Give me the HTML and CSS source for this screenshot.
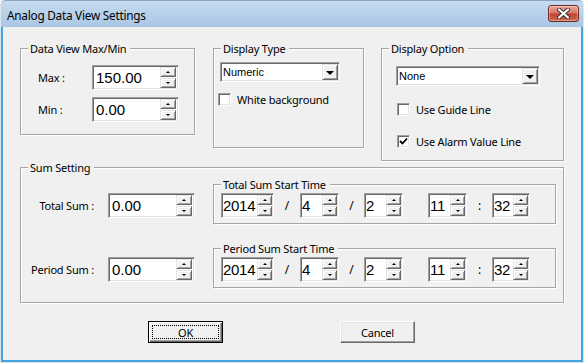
FILE: index.html
```html
<!DOCTYPE html>
<html>
<head>
<meta charset="utf-8">
<link rel="stylesheet" href="styles.css">
</head>
<body>
<div class="window">
  <div class="titlebar">
    <span class="title">Analog Data View Settings</span>
    <div class="close">
      <svg width="15" height="11" viewBox="0 0 15 11">
        <path d="M3 1.5 L12 9.5 M12 1.5 L3 9.5" stroke="#3a2a2a" stroke-width="4" stroke-linecap="round" fill="none"/>
        <path d="M3 1.5 L12 9.5 M12 1.5 L3 9.5" stroke="#ffffff" stroke-width="2.2" stroke-linecap="round" fill="none"/>
      </svg>
    </div>
  </div>
  <div class="client">
    <div class="top-row">
      <div class="group g-maxmin">
        <span class="legend">Data View Max/Min</span>
        <div class="field-row">
          <span class="lbl lbl-mm">Max :</span>
          <div class="edit edit-87"><span class="val">150.00</span><span class="ud"><i class="up"></i><i class="dn"></i></span></div>
        </div>
        <div class="field-row">
          <span class="lbl lbl-mm">Min :</span>
          <div class="edit edit-87"><span class="val">0.00</span><span class="ud"><i class="up"></i><i class="dn"></i></span></div>
        </div>
      </div>
      <div class="group g-type">
        <span class="legend">Display Type</span>
        <div class="combo combo-type"><span class="ctext">Numeric</span><span class="carrow"></span></div>
        <label class="check check-type"><span class="cb"></span><span class="ctxt">White background</span></label>
      </div>
      <div class="group g-opt">
        <span class="legend">Display Option</span>
        <div class="combo combo-opt"><span class="ctext">None</span><span class="carrow"></span></div>
        <label class="check check-opt1"><span class="cb"></span><span class="ctxt">Use Guide Line</span></label>
        <label class="check check-opt2"><span class="cb checked"><svg width="9" height="9" viewBox="0 0 9 9"><path d="M1 4 L3.5 6.5 L8 1.5" stroke="#000" stroke-width="1.8" fill="none"/></svg></span><span class="ctxt">Use Alarm Value Line</span></label>
      </div>
    </div>

    <div class="group g-sum">
      <span class="legend">Sum Setting</span>
      <div class="sum-row">
        <div class="sum-left">
          <span class="lbl lbl-sum">Total Sum :</span>
          <div class="edit edit-87"><span class="val">0.00</span><span class="ud"><i class="up"></i><i class="dn"></i></span></div>
        </div>
        <div class="group g-time">
          <span class="legend">Total Sum Start Time</span>
          <div class="time-row">
            <div class="edit edit-t edit-year"><span class="val">2014</span><span class="ud"><i class="up"></i><i class="dn"></i></span></div>
            <span class="sep sep-first">/</span>
            <div class="edit edit-t edit-small"><span class="val">4</span><span class="ud"><i class="up"></i><i class="dn"></i></span></div>
            <span class="sep">/</span>
            <div class="edit edit-t edit-small"><span class="val">2</span><span class="ud"><i class="up"></i><i class="dn"></i></span></div>
            <span class="sep"></span>
            <div class="edit edit-t edit-small"><span class="val">11</span><span class="ud"><i class="up"></i><i class="dn"></i></span></div>
            <span class="sep">:</span>
            <div class="edit edit-t edit-min"><span class="val">32</span><span class="ud"><i class="up"></i><i class="dn"></i></span></div>
          </div>
        </div>
      </div>
      <div class="sum-row sum-row-2">
        <div class="sum-left">
          <span class="lbl lbl-sum">Period Sum :</span>
          <div class="edit edit-87"><span class="val">0.00</span><span class="ud"><i class="up"></i><i class="dn"></i></span></div>
        </div>
        <div class="group g-time">
          <span class="legend">Period Sum Start Time</span>
          <div class="time-row">
            <div class="edit edit-t edit-year"><span class="val">2014</span><span class="ud"><i class="up"></i><i class="dn"></i></span></div>
            <span class="sep sep-first">/</span>
            <div class="edit edit-t edit-small"><span class="val">4</span><span class="ud"><i class="up"></i><i class="dn"></i></span></div>
            <span class="sep">/</span>
            <div class="edit edit-t edit-small"><span class="val">2</span><span class="ud"><i class="up"></i><i class="dn"></i></span></div>
            <span class="sep"></span>
            <div class="edit edit-t edit-small"><span class="val">11</span><span class="ud"><i class="up"></i><i class="dn"></i></span></div>
            <span class="sep">:</span>
            <div class="edit edit-t edit-min"><span class="val">32</span><span class="ud"><i class="up"></i><i class="dn"></i></span></div>
          </div>
        </div>
      </div>
    </div>

    <div class="buttons">
      <div class="btn btn-default"><span class="focus">OK</span></div>
      <div class="btn btn-cancel">Cancel</div>
    </div>
  </div>
</div>
</body>
</html>
```
FILE: styles.css
```css
* { box-sizing: border-box; }
html, body { margin: 0; padding: 0; background: #f0f0f0; }
body {
  font-family: "Noto Sans", sans-serif;
  font-size: 11px;
  letter-spacing: -0.2px;
  color: #000;
}
.window {
  width: 584px;
  height: 363px;
  display: flex;
  flex-direction: column;
  background: #b9d1ea;
  border: 1px solid #8ba2bb;
  border-bottom-color: #dbe6f1;
  border-left-color: #dbe6f1;
  border-right-color: #dbe6f1;
  border-radius: 6px 6px 0 0;
  overflow: hidden;
}
.titlebar {
  height: 26px;
  flex: none;
  display: flex;
  align-items: center;
  justify-content: space-between;
  padding: 0 4px 0 6px;
  background: linear-gradient(#c6dbf0, #aac6e4);
}
.title { font-size: 11.8px; letter-spacing: -0.25px; color: #000; padding-top: 1px; }
.close {
  width: 31px;
  height: 17px;
  margin-top: -2px;
  border: 1px solid #6b2a24;
  border-radius: 3px;
  background: linear-gradient(#e9a99c 0%, #d3776a 45%, #c3422f 55%, #cf6a52 100%);
  box-shadow: inset 0 0 0 1px rgba(255,255,255,0.35);
  display: flex;
  align-items: center;
  justify-content: center;
}
.client {
  flex: 1;
  background: #f0f0f0;
  border: 2px solid #47a3dc;
  border-top: none;
  padding: 21px 0 0 17px;
}

/* group boxes */
.group {
  position: relative;
  border: 1px solid #a6a6a6;
  box-shadow: 1px 1px 0 #fff, inset 1px 1px 0 #fff;
}
.legend {
  position: absolute;
  top: -8px;
  left: 7px;
  padding: 0 4px 0 2px;
  line-height: 15px;
  background: #f0f0f0;
  white-space: nowrap;
}
.top-row { display: flex; align-items: flex-start; }
.g-maxmin { width: 175px; height: 87px; padding: 16px 0 0 17px; }
.g-type { width: 151px; height: 100px; margin-left: 18px; padding: 13px 0 0 6px; }
.g-opt { width: 183px; height: 113px; margin-left: 17px; padding: 17px 0 0 14px; }

.field-row { display: flex; align-items: center; }
.field-row + .field-row { margin-top: 7px; }
.lbl-mm { width: 54px; }

/* spin edits */
.edit {
  display: flex;
  height: 25px;
  background: #fff;
  border: 1px solid;
  border-color: #a0a0a0 #fff #fff #a0a0a0;
  box-shadow: inset 1px 1px 0 #696969, inset -1px -1px 0 #e3e3e3;
  padding: 1px;
}
.edit .val {
  flex: 1;
  min-width: 0;
  font-family: "Liberation Sans", Arial, sans-serif;
  font-size: 15px;
  letter-spacing: 0;
  line-height: 21px;
  padding-left: 1px;
  white-space: nowrap;
}
.edit-87 { width: 87px; }
.edit-87 .val { padding-left: 2px; }
.edit-t { padding: 1px 0 1px 1px; }
.edit-t .val { padding-left: 0; letter-spacing: -0.3px; }
.edit-year { width: 53px; }
.edit-small { width: 39px; }
.edit-min { width: 38px; }
.ud {
  flex: none;
  width: 17px;
  display: flex;
  flex-direction: column;
  gap: 1px;
  padding: 0 1px 0 0;
}
.edit-t .ud { width: 16px; }
.ud i {
  flex: 1;
  display: flex;
  align-items: center;
  justify-content: center;
  background: #f0f0f0;
  border: 1px solid;
  border-color: #e3e3e3 #696969 #696969 #e3e3e3;
  box-shadow: inset 1px 1px 0 #fff, inset -1px -1px 0 #a0a0a0;
}
.ud i::after {
  content: "";
  width: 0;
  height: 0;
  border-left: 2px solid transparent;
  border-right: 2px solid transparent;
}
.ud .up::after { border-bottom: 2px solid #000; }
.ud .dn::after { border-top: 2px solid #000; }

/* combos */
.combo {
  display: flex;
  height: 20px;
  background: #fff;
  border: 1px solid;
  border-color: #a0a0a0 #fff #fff #a0a0a0;
  box-shadow: inset 1px 1px 0 #696969, inset -1px -1px 0 #e3e3e3;
  padding: 1px;
}
.combo-type { width: 120px; }
.combo-opt { width: 144px; }
.ctext {
  flex: 1;
  font-family: "Liberation Sans", Arial, sans-serif;
  font-size: 11px;
  letter-spacing: 0;
  line-height: 16px;
  padding-left: 1px;
}
.carrow {
  flex: none;
  width: 16px;
  height: 16px;
  display: flex;
  align-items: center;
  justify-content: center;
  background: #f0f0f0;
  border: 1px solid;
  border-color: #e3e3e3 #696969 #696969 #e3e3e3;
  box-shadow: inset 1px 1px 0 #fff, inset -1px -1px 0 #a0a0a0;
}
.carrow::after {
  content: "";
  border-left: 4px solid transparent;
  border-right: 4px solid transparent;
  border-top: 4px solid #000;
  margin-top: 1px;
}

/* checkboxes */
.check { display: flex; align-items: center; gap: 6px; line-height: 13px; }
.cb {
  width: 13px;
  height: 13px;
  background: #fff;
  border: 1px solid;
  border-color: #a0a0a0 #fff #fff #a0a0a0;
  box-shadow: inset 1px 1px 0 #696969, inset -1px -1px 0 #e3e3e3;
  display: flex;
  align-items: center;
  justify-content: center;
}
.check-type { margin: 11px 0 0 -2px; }
.check-opt1 { margin: 17px 0 0 1px; }
.check-opt2 { margin: 19px 0 0 1px; }

/* sum group */
.g-sum {
  width: 544px;
  height: 136px;
  margin-top: 6px;
  padding: 16px 0 0 0;
}
.sum-row { display: flex; align-items: flex-end; }
.sum-row-2 { margin-top: 24px; }
.sum-left { display: flex; align-items: center; margin-bottom: 6px; }
.lbl-sum { width: 73px; text-align: right; margin-right: 14px; }
.g-time {
  width: 343px;
  height: 40px;
  margin-left: 18px;
  padding: 8px 0 0 7px;
}
.time-row { display: flex; align-items: center; }
.sep { width: 25px; text-align: center; font-size: 12px; }
.sep-first { width: 26px; }

/* buttons */
.buttons {
  display: flex;
  gap: 117px;
  margin-top: 18px;
  padding-left: 128px;
}
.btn {
  width: 75px;
  height: 22px;
  display: flex;
  align-items: center;
  justify-content: center;
  background: #f0f0f0;
  border: 1px solid;
  border-color: #fff #696969 #696969 #fff;
  box-shadow: inset -1px -1px 0 #a0a0a0, inset 1px 1px 0 #e3e3e3;
}
.btn-default {
  border: 1px solid #000;
  box-shadow: inset 1px 1px 0 #fff, inset -1px -1px 0 #696969, inset -2px -2px 0 #a0a0a0;
  padding: 3px;
}
.focus {
  width: 100%;
  height: 100%;
  border: 1px dotted #000;
  display: flex;
  align-items: center;
  justify-content: center;
}
```
